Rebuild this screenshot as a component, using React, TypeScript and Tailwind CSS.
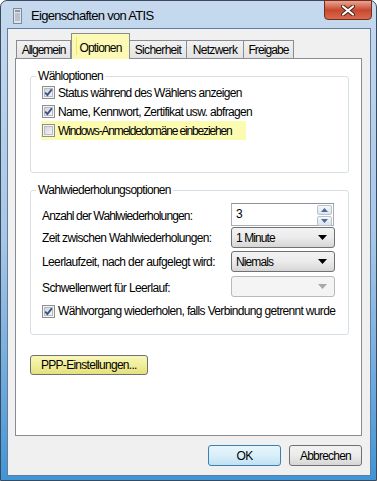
import React from 'react';

const font = { fontFamily: '"Liberation Sans", Arial, sans-serif' };

function CheckBox({ checked }: { checked: boolean }) {
  return (
    <svg width="13" height="13" viewBox="0 0 13 13" className="shrink-0">
      <defs>
        <linearGradient id="cbg" x1="0" y1="0" x2="1" y2="1">
          <stop offset="0" stopColor="#cfd3d8" />
          <stop offset="1" stopColor="#f7f7f7" />
        </linearGradient>
      </defs>
      <rect x="0.5" y="0.5" width="12" height="12" fill="#f4f4f4" stroke="#8e8f8f" />
      <rect x="2.5" y="2.5" width="8" height="8" fill="url(#cbg)" stroke="#b8bcc2" />
      {checked && (
        <path d="M3.2 6.6 L5.4 9 L9.8 3.4" fill="none" stroke="#3c528a" strokeWidth="1.9" />
      )}
    </svg>
  );
}

function Arrow({ disabled }: { disabled?: boolean }) {
  return (
    <svg width="9" height="5" viewBox="0 0 9 5">
      <path d="M0 0 H9 L4.5 5 Z" fill={disabled ? '#a9a9a9' : '#000'} />
    </svg>
  );
}

function Combo({ value, disabled }: { value?: string; disabled?: boolean }) {
  return (
    <div
      className={
        disabled
          ? 'flex h-[21px] w-[104px] shrink-0 items-center justify-between rounded-[3px] border border-[#b7babc] bg-[#f4f4f4] pl-[4px] pr-[7px]'
          : 'flex h-[21px] w-[104px] shrink-0 items-center justify-between rounded-[3px] border border-[#707070] bg-gradient-to-b from-[#f3f3f3] via-[#ebebeb] to-[#d6d6d6] pl-[4px] pr-[7px]'
      }
    >
      <span className="whitespace-nowrap text-[12px] leading-none tracking-[-0.9px] text-black">{value}</span>
      <Arrow disabled={disabled} />
    </div>
  );
}

function SpinArrow({ up }: { up: boolean }) {
  return (
    <div className="flex h-[10px] w-[15px] items-center justify-center rounded-[2px] border border-[#b9c3ce] bg-gradient-to-b from-[#f5f7fa] to-[#dde4ec]">
      <svg width="7" height="4" viewBox="0 0 7 4">
        <path d={up ? 'M0 4 L3.5 0 L7 4 Z' : 'M0 0 H7 L3.5 4 Z'} fill="#4e6a9c" />
      </svg>
    </div>
  );
}

const tab =
  'flex h-[18px] items-center justify-center whitespace-nowrap border border-b-0 border-[#898c95] bg-gradient-to-b from-[#f2f2f2] to-[#e3e3e3]';

export default function App() {
  return (
    <div style={font} className="h-[481px] w-[377px] bg-white text-[12px] tracking-[-0.7px] text-black">
      <div className="relative h-[481px] w-[377px] rounded-t-[7px] border border-[#3a4a5e] bg-gradient-to-b from-[#c6d9ee] via-[#a7c6e6] to-[#3f95d6] pl-[6px] pr-[5px] pb-[4px]">
        {/* title bar */}
        <div className="flex h-[27px] items-center pl-[6px] pt-[2px]">
          <svg width="9" height="16" viewBox="0 0 9 16" className="mr-[9px]">
            <rect x="0.5" y="0.5" width="8" height="15" fill="#dfe4ea" stroke="#7d8a99" />
            <rect x="2" y="2" width="5" height="2" fill="#8a98a8" />
            <path d="M2 6 H7 M2 8 H7 M2 10 H7 M2 12 H7" stroke="#93a1b1" strokeWidth="1" />
          </svg>
          <span className="whitespace-nowrap text-[13px] leading-none tracking-[-0.7px] text-black">
            Eigenschaften von ATIS
          </span>
        </div>
        <div className="absolute right-[4px] top-[-1px] flex h-[20px] w-[48px] items-center justify-center rounded-b-[4px] border border-[#6e2e22] bg-gradient-to-b from-[#e9a592] via-[#c8482f] to-[#d86a4d]">
          <svg width="14" height="11" viewBox="0 0 14 11">
            <path d="M2 1.5 L12 9.5 M12 1.5 L2 9.5" stroke="#4a2118" strokeWidth="4" strokeLinecap="round" />
            <path d="M2 1.5 L12 9.5 M12 1.5 L2 9.5" stroke="#ffffff" strokeWidth="2.2" strokeLinecap="round" />
          </svg>
        </div>

        {/* client area */}
        <div className="h-[448px] w-[364px] border border-[#617f9c] bg-[#f0f0f0]">
          {/* tabs */}
          <div className="ml-[8px] mt-[5px] flex h-[24px] items-end">
            <div className={`${tab} w-[55px] tracking-[-1px]`}>Allgemein</div>
            <div className="relative z-10 -mb-px flex h-[26px] w-[59px] items-start justify-center whitespace-nowrap border border-b-0 border-[#898c95] bg-[#fbf9b4] pt-[5px] tracking-[-0.85px]">
              <span className="absolute left-[4px] top-[3px] h-[18px] w-px bg-[#f1e85a]" />
              Optionen
            </div>
            <div className={`${tab} w-[57px] border-l-0`}>Sicherheit</div>
            <div className={`${tab} w-[57px] border-l-0`}>Netzwerk</div>
            <div className={`${tab} w-[50px] border-l-0 tracking-[-0.9px]`}>Freigabe</div>
          </div>

          {/* panel */}
          <div className="ml-[7px] h-[378px] w-[347px] whitespace-nowrap border border-[#898c95] bg-white">
            <fieldset className="ml-[14px] mt-[11px] w-[319px] min-w-0 rounded-[3px] border border-[#d5dfe5] pb-[32px] pl-[11px]">
              <legend className="-ml-[6px] px-[2px] text-[12px] leading-[13px]">Wähloptionen</legend>
              <div className="flex h-[19px] items-center gap-[3px]">
                <CheckBox checked />
                <span>Status während des Wählens anzeigen</span>
              </div>
              <div className="flex h-[19px] items-center gap-[3px]">
                <CheckBox checked />
                <span className="tracking-[-0.65px]">Name, Kennwort, Zertifikat usw. abfragen</span>
              </div>
              <div className="-ml-px flex h-[19px] w-[205px] items-center gap-[3px] bg-[#fcfbb2] pl-px">
                <CheckBox checked={false} />
                <span className="tracking-[-1.15px]">Windows-Anmeldedomäne einbeziehen</span>
              </div>
            </fieldset>

            <fieldset className="ml-[14px] mt-[11px] w-[319px] min-w-0 rounded-[3px] border border-[#d5dfe5] pb-[14px] pl-[11px]">
              <legend className="-ml-[6px] px-[2px] text-[12px] leading-[13px]">Wahlwiederholungsoptionen</legend>
              <div className="mt-[6px] flex h-[23px] items-center justify-between pr-[14px]">
                <span className="pt-[3px] tracking-[-0.85px]">Anzahl der Wahlwiederholungen:</span>
                <div className="flex h-[23px] w-[103px] shrink-0 items-start justify-between border border-[#abadb3] border-t-[#8e939c] bg-white pl-[4px] pr-px pt-px">
                  <span className="leading-[18px]">3</span>
                  <div className="flex flex-col gap-px">
                    <SpinArrow up />
                    <SpinArrow up={false} />
                  </div>
                </div>
              </div>
              <div className="mt-px flex h-[21px] items-center justify-between pr-[13px]">
                <span className="tracking-[-0.65px]">Zeit zwischen Wahlwiederholungen:</span>
                <Combo value="1 Minute" />
              </div>
              <div className="mt-[3px] flex h-[21px] items-center justify-between pr-[13px]">
                <span className="tracking-[-0.63px]">Leerlaufzeit, nach der aufgelegt wird:</span>
                <Combo value="Niemals" />
              </div>
              <div className="mt-[4px] flex h-[21px] items-center justify-between pr-[13px]">
                <span className="pt-[3px] tracking-[-0.62px]">Schwellenwert für Leerlauf:</span>
                <Combo disabled />
              </div>
              <div className="mt-[5px] flex h-[18px] items-center gap-[3px]">
                <CheckBox checked />
                <span className="tracking-[-0.66px]">Wählvorgang wiederholen, falls Verbindung getrennt wurde</span>
              </div>
            </fieldset>

            <button className="ml-[14px] mt-[20px] flex h-[20px] w-[118px] items-center whitespace-nowrap rounded-[3px] border border-[#707070] bg-gradient-to-b from-[#f7f6b8] via-[#f1ef9a] to-[#e3e07c] pl-[10px] text-[12px] tracking-[-0.72px]">
              PPP-Einstellungen...
            </button>
          </div>

          {/* dialog buttons */}
          <div className="mt-[9px] flex justify-end gap-[8px] pr-[8px]">
            <button className="flex h-[21px] w-[73px] items-center justify-center rounded-[3px] border border-[#3c7fb1] bg-gradient-to-b from-[#e8f5fc] via-[#d9effa] to-[#bfe1f3] text-[12px] tracking-[-0.6px]">
              OK
            </button>
            <button className="flex h-[21px] w-[73px] items-center justify-center rounded-[3px] border border-[#707070] bg-gradient-to-b from-[#f2f2f2] via-[#ebebeb] to-[#d6d6d6] text-[12px] tracking-[-0.78px]">
              Abbrechen
            </button>
          </div>
        </div>
      </div>
    </div>
  );
}
